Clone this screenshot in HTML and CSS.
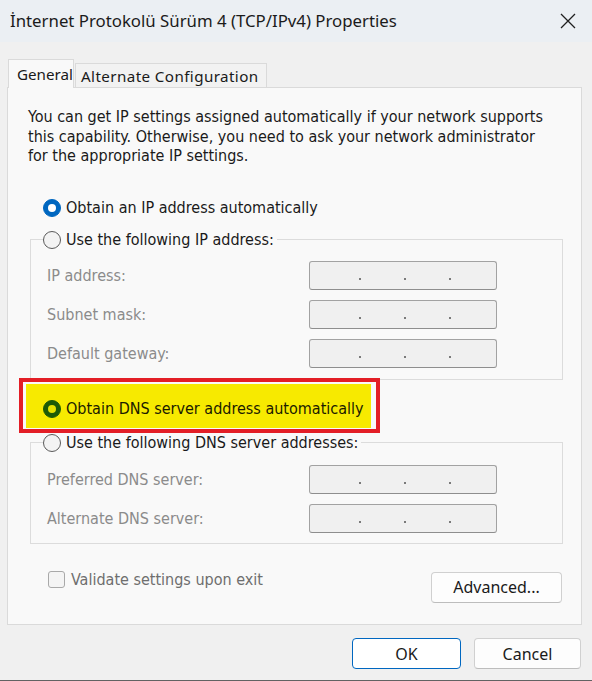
FILE: index.html
```html
<!DOCTYPE html>
<html lang="en">
<head>
<meta charset="utf-8">
<title>Internet Protocol Version 4 Properties</title>
<link rel="stylesheet" href="styles.css">
</head>
<body>
<div class="window">
  <div class="titlebar">
    <span class="title">İnternet Protokolü Sürüm 4 (TCP/IPv4) Properties</span>
    <svg class="close" width="16" height="16" viewBox="0 0 16 16"><path d="M1 1 L15 15 M15 1 L1 15" stroke="#1f1f1f" stroke-width="1.3" fill="none"/></svg>
  </div>
  <div class="main">
    <div class="tabs">
      <div class="tab active">General</div>
      <div class="tab other">Alternate Configuration</div>
    </div>
    <div class="panel">
      <p class="intro">You can get IP settings assigned automatically if your network supports<br>this capability. Otherwise, you need to ask your network administrator<br>for the appropriate IP settings.</p>
      <div class="radio-row first"><span class="radio on"></span><span>Obtain an IP address automatically</span></div>
      <fieldset class="group g1">
        <legend class="radio-row"><span class="radio"></span><span>Use the following IP address:</span></legend>
        <div class="field-row"><span class="flabel">IP address:</span><span class="ipbox"><i></i><i></i><i></i></span></div>
        <div class="field-row"><span class="flabel">Subnet mask:</span><span class="ipbox"><i></i><i></i><i></i></span></div>
        <div class="field-row"><span class="flabel">Default gateway:</span><span class="ipbox"><i></i><i></i><i></i></span></div>
      </fieldset>
      <div class="highlight">
        <div class="hl-inner">
          <div class="radio-row"><span class="radio green"></span><span class="hl-text">Obtain DNS server address automatically</span></div>
        </div>
      </div>
      <fieldset class="group g2">
        <legend class="radio-row"><span class="radio"></span><span>Use the following DNS server addresses:</span></legend>
        <div class="field-row"><span class="flabel">Preferred DNS server:</span><span class="ipbox"><i></i><i></i><i></i></span></div>
        <div class="field-row"><span class="flabel">Alternate DNS server:</span><span class="ipbox"><i></i><i></i><i></i></span></div>
      </fieldset>
      <div class="bottom-row">
        <div class="check"><span class="box"></span><span>Validate settings upon exit</span></div>
        <div class="btn adv">Advanced...</div>
      </div>
    </div>
    <div class="footer">
      <div class="btn ok">OK</div>
      <div class="btn cancel">Cancel</div>
    </div>
  </div>
</div>
</body>
</html>
```
FILE: styles.css
```css
* { box-sizing: border-box; }
body { margin: 0; background: #f0f0f0; }

.window {
  width: 592px;
  height: 681px;
  background: #f0f0f0;
  border-bottom: 1px solid #626262;
  display: flex;
  flex-direction: column;
  overflow: hidden;
}

.titlebar {
  height: 42px;
  flex: none;
  background: #ebeff3;
  display: flex;
  align-items: center;
  justify-content: space-between;
  padding: 0 16px 0 10px;
}
.title {
  font-family: "Noto Sans", "Open Sans", sans-serif;
  font-size: 16.8px;
  color: #1b1b1b;
  line-height: 20px;
}
.close { display: block; }

.main {
  padding: 17px 10px 0 7px;
  display: flex;
  flex-direction: column;
}

.tabs {
  display: flex;
  align-items: flex-end;
  gap: 1px;
  padding-left: 1px;
  margin-bottom: -1px;
  position: relative;
  z-index: 1;
  font-family: "Noto Sans", "Open Sans", sans-serif;
  font-size: 15.2px;
  color: #1a1a1a;
  white-space: nowrap;
}
.tab {
  height: 25px;
  border: 1px solid #dadada;
  border-bottom: none;
  background: #f2f2f2;
  display: flex;
  align-items: center;
}
.tab.active {
  width: 66px;
  height: 29px;
  background: #f9f9f9;
  padding-left: 8px;
  padding-bottom: 1px;
}
.tab.other {
  width: 192px;
  padding-left: 5px;
  letter-spacing: 0.4px;
  border-bottom: 1px solid #dadada;
}

.panel {
  height: 538px;
  border: 1px solid #dadada;
  background: #f9f9f9;
  padding: 19px 18px 0 20px;
  font-family: "DejaVu Sans", sans-serif;
  font-stretch: condensed;
  font-size: 16px;
  color: #1a1a1a;
}

.intro {
  margin: 0;
  line-height: 19.5px;
  white-space: nowrap;
}

.radio-row {
  display: flex;
  align-items: center;
  gap: 5px;
  height: 20px;
  line-height: 20px;
  white-space: nowrap;
}
.radio-row.first { margin: 32px 0 0 15px; }

.radio {
  width: 18px;
  height: 18px;
  border-radius: 50%;
  border: 1px solid #5a5a5a;
  background: #f3f3f3;
  flex: none;
  display: flex;
  align-items: center;
  justify-content: center;
}
.radio.on {
  background: #0067c0;
  border-color: #0067c0;
}
.radio.on::after {
  content: "";
  width: 8px;
  height: 8px;
  border-radius: 50%;
  background: #ffffff;
}
.radio.green {
  background: #1c5a06;
  border-color: #1c5a06;
}
.radio.green::after {
  content: "";
  width: 8px;
  height: 8px;
  border-radius: 50%;
  background: #e6e200;
}

.group {
  margin: 12px 0 0 2px;
  padding: 11px 0 11px 0;
  border: 1px solid #dcdcdc;
  min-width: 0;
}
.group legend {
  margin-left: 12px;
  padding: 0 3px 0 0;
  background: #f9f9f9;
}
.group.g2 {
  margin-top: 0;
  padding-top: 12px;
  padding-bottom: 10px;
}

.field-row {
  display: flex;
  align-items: center;
  margin-left: 16px;
  height: 29px;
}
.field-row + .field-row { margin-top: 10px; }
.flabel {
  width: 262px;
  color: #8b8b8b;
  flex: none;
}
.ipbox {
  width: 188px;
  height: 29px;
  border: 1px solid #a2a2a2;
  border-bottom-color: #8e8e8e;
  border-radius: 3px;
  background: #f0f0f0;
  display: flex;
  align-items: flex-end;
  padding: 0 0 9px 49px;
  gap: 43px;
}
.ipbox i {
  width: 2px;
  height: 2px;
  background: #7a7a7a;
}

.highlight {
  position: relative;
  z-index: 1;
  margin: -2px 0 0 -9px;
  width: 361px;
  height: 55px;
  border: 4px solid #e31e26;
  background: #f9f9f9;
  padding: 2px 5px 1px 3px;
}
.hl-inner {
  height: 100%;
  background: #f7ea00;
  padding: 15px 0 0 17px;
}
.hl-text { color: #1b1b00; }

.bottom-row {
  display: flex;
  justify-content: space-between;
  align-items: flex-start;
  margin-top: 27px;
}
.check {
  display: flex;
  align-items: center;
  gap: 6px;
  margin-left: 20px;
  height: 17px;
  color: #6e6e6e;
  white-space: nowrap;
}
.box {
  width: 17px;
  height: 17px;
  border: 1px solid #a9a9a9;
  border-radius: 3px;
  background: #f4f4f4;
  flex: none;
}

.btn {
  height: 31px;
  border: 1px solid #d0d0d0;
  border-bottom-color: #bdbdbd;
  border-radius: 4px;
  background: #fdfdfd;
  display: flex;
  align-items: center;
  justify-content: center;
  font-family: "Noto Sans", "Open Sans", sans-serif;
  font-size: 16px;
  color: #1a1a1a;
}
.btn.adv {
  width: 131px;
  margin: 1px 1px 0 0;
}

.footer {
  display: flex;
  justify-content: flex-end;
  gap: 13px;
  margin-top: 13px;
  padding-right: 1px;
}
.btn.ok {
  width: 109px;
  border: 1px solid #0067c0;
  background: #ffffff;
}
.btn.cancel { width: 107px; }
```
